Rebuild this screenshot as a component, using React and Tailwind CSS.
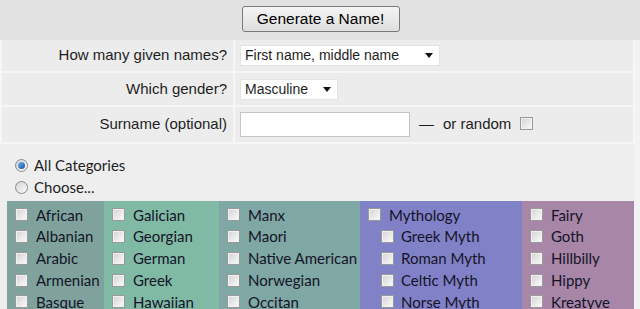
import { useState } from 'react'

const columns = [
  { bg: 'bg-[#7fa39c]', width: 'w-[97px]', items: ['African', 'Albanian', 'Arabic', 'Armenian', 'Basque'] },
  { bg: 'bg-[#80baa5]', width: 'w-[115px]', items: ['Galician', 'Georgian', 'German', 'Greek', 'Hawaiian'] },
  { bg: 'bg-[#7fa7a3]', width: 'w-[141px]', items: ['Manx', 'Maori', 'Native American', 'Norwegian', 'Occitan'] },
  { bg: 'bg-[#8181c7]', width: 'w-[162px]', items: ['Mythology', 'Greek Myth', 'Roman Myth', 'Celtic Myth', 'Norse Myth'], nested: true },
  { bg: 'bg-[#a886a8]', width: 'w-[112px]', items: ['Fairy', 'Goth', 'Hillbilly', 'Hippy', 'Kreatyve'] },
]

function Box({ checked, onClick }) {
  return (
    <span
      onClick={onClick}
      className="inline-block w-[13px] h-[13px] shrink-0 border border-[#9a9a9a] bg-gradient-to-br from-[#d2d2d2] to-[#fcfcfc] shadow-[inset_0_0_0_1px_#f0f0f0]"
    >
      {checked && <span className="block w-[5px] h-[5px] m-[3px] bg-[#333]" />}
    </span>
  )
}

function Radio({ on }) {
  return (
    <span className="inline-flex items-center justify-center w-[13px] h-[13px] rounded-full border border-[#8a8a8a] bg-gradient-to-br from-[#d4d4d4] to-[#fbfbfb]">
      {on && <span className="w-[7px] h-[7px] rounded-full bg-gradient-to-br from-[#6fb6ff] to-[#1a4f9c]" />}
    </span>
  )
}

function Arrow() {
  return (
    <svg width="8" height="5" viewBox="0 0 8 5" className="shrink-0">
      <path d="M0 0h8L4 5z" fill="#111" />
    </svg>
  )
}

export default function App() {
  const [checks, setChecks] = useState({})
  const [all, setAll] = useState(true)
  const toggle = (k) => setChecks((c) => ({ ...c, [k]: !c[k] }))

  return (
    <div className="min-h-screen bg-[#f3f3f3] text-[#1e1e1e]" style={{ fontFamily: '"Liberation Sans", Arial, sans-serif' }}>
      <div className="h-10 bg-[#e2e2e2] flex justify-center pt-[6px]">
        <button className="h-[26px] w-[158px] ml-[1px] rounded-[3px] border border-[#7a7a7a] bg-gradient-to-b from-[#f4f4f4] to-[#dedede] text-[15.5px] text-black leading-none">
          Generate a Name!
        </button>
      </div>

      <div className="w-[635px] bg-[#f6f6f6] p-[2px] pt-0 flex flex-col gap-[2px] text-[15px]">
        <div className="flex gap-[2px] h-[31px]">
          <div className="w-[231px] bg-[#ececec] flex items-center justify-end pr-[6px]">How many given names?</div>
          <div className="flex-1 bg-[#ececec] flex items-center pl-[5px]">
            <div className="w-[200px] h-[21px] bg-white border border-[#e4e4e4] flex items-center justify-between pl-[4px] pr-[6px] text-[14px]">
              <span>First name, middle name</span>
              <Arrow />
            </div>
          </div>
        </div>
        <div className="flex gap-[2px] h-[32px]">
          <div className="w-[231px] bg-[#ececec] flex items-center justify-end pr-[6px]">Which gender?</div>
          <div className="flex-1 bg-[#ececec] flex items-center pl-[5px]">
            <div className="w-[98px] h-[21px] bg-white border border-[#e4e4e4] flex items-center justify-between pl-[4px] pr-[6px] text-[14px]">
              <span>Masculine</span>
              <Arrow />
            </div>
          </div>
        </div>
        <div className="flex gap-[2px] h-[35px]">
          <div className="w-[231px] bg-[#ececec] flex items-center justify-end pr-[6px]">Surname (optional)</div>
          <div className="flex-1 bg-[#ececec] flex items-center pl-[5px]">
            <div className="w-[170px] h-[25px] bg-white border border-[#c4c4c4]" />
            <span className="ml-[9px]">—</span>
            <span className="ml-[9px]">or random</span>
            <span className="ml-[9px] mt-[1px]">
              <Box checked={checks.random} onClick={() => toggle('random')} />
            </span>
          </div>
        </div>
      </div>

      <div className="w-[634px] bg-[#eeeeee] pl-[7px] pt-[10px]" style={{ fontFamily: 'Lato, "Open Sans", sans-serif' }}>
        <div className="text-[15px] leading-[22px] pl-[8px]">
          <div className="flex items-center gap-[6px] cursor-pointer" onClick={() => setAll(true)}>
            <Radio on={all} />
            <span>All Categories</span>
          </div>
          <div className="flex items-center gap-[6px] cursor-pointer" onClick={() => setAll(false)}>
            <Radio on={!all} />
            <span>Choose...</span>
          </div>
        </div>

        <div className="flex mt-[3px] text-[15px] text-[#141428]">
          {columns.map((col, ci) => (
            <div key={ci} className={`${col.bg} ${col.width} pt-[3px] pb-[4px]`}>
              {col.items.map((item, i) => (
                <div
                  key={item}
                  className={`flex items-center h-[21.75px] ${col.nested && i > 0 ? 'pl-[21px] gap-[7px]' : 'pl-[8px] gap-[8px]'}`}
                >
                  <Box checked={checks[item]} onClick={() => toggle(item)} />
                  <span className="whitespace-nowrap">{item}</span>
                </div>
              ))}
            </div>
          ))}
        </div>
      </div>
    </div>
  )
}
